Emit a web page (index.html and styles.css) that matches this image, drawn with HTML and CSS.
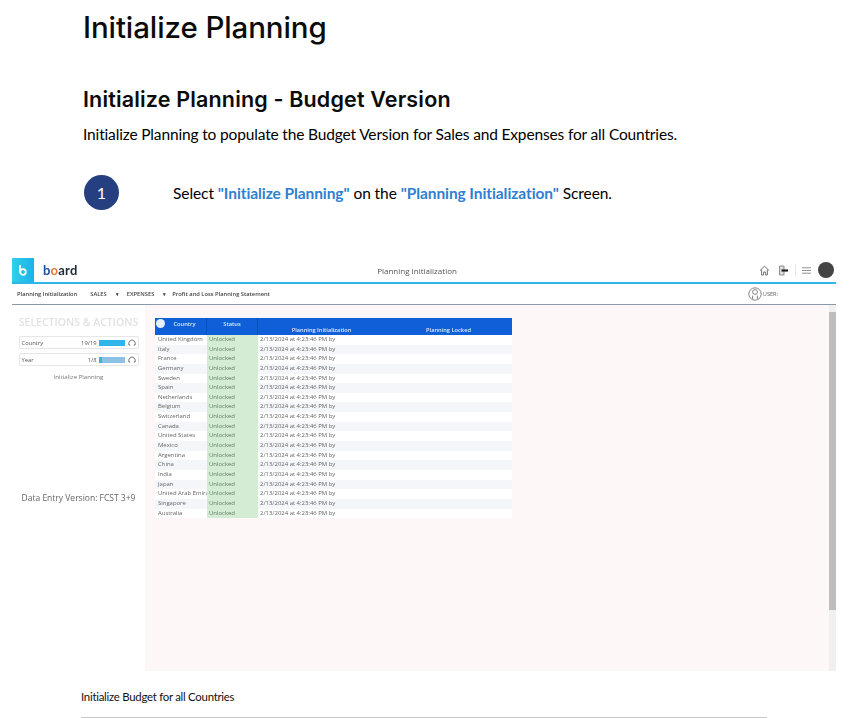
FILE: index.html
```html
<!DOCTYPE html>
<html lang="en">
<head>
<meta charset="utf-8">
<title>Initialize Planning</title>
<link rel="stylesheet" href="styles.css">
</head>
<body>
<main class="doc">
  <h1 class="title">Initialize Planning</h1>
  <h2 class="subtitle">Initialize Planning - Budget Version</h2>
  <p class="lead">Initialize Planning to populate the Budget Version for Sales and Expenses for all Countries.</p>
  <div class="step">
    <span class="step-num">1</span>
    <p class="step-text">Select <b>"Initialize Planning"</b> on the <b>"Planning Initialization"</b> Screen.</p>
  </div>
  <figure class="shot">
    <header class="app-head">
      <div class="brand-tile">
        <svg width="10" height="12" viewBox="0 0 10 12"><path d="M2 1v7.5" stroke="#fff" stroke-width="1.8" fill="none"/><circle cx="5" cy="8" r="2.8" stroke="#fff" stroke-width="1.8" fill="none"/></svg>
      </div>
      <div class="brand-name"><span class="brand-b">b</span><span class="brand-o">o</span>ard</div>
      <div class="app-title">Planning Initialization</div>
      <div class="app-icons">
        <svg class="ic" width="11" height="11" viewBox="0 0 11 11"><path d="M1 5.5 5.5 1.2 10 5.5M2.6 4.6V10h2V7h2v3h1.8V4.6" fill="none" stroke="#666" stroke-width=".9"/></svg>
        <svg class="ic ic-exit" width="11" height="11" viewBox="0 0 11 11"><path d="M1.5 1h4.5v9H1.5z" fill="#ddd" stroke="#777" stroke-width=".8"/><path d="M3.5 5.5h6.5" stroke="#222" stroke-width="2.2"/></svg>
        <span class="divider"></span>
        <svg class="ic ic-menu" width="9" height="7" viewBox="0 0 9 7"><path d="M0 .8h9M0 3.5h9M0 6.2h9" stroke="#888" stroke-width=".9"/></svg>
        <span class="avatar"></span>
      </div>
    </header>
    <nav class="app-nav">
      <span class="nav-a">Planning Initialization</span>
      <span class="nav-b">SALES</span><span class="caret">▾</span>
      <span class="nav-c">EXPENSES</span><span class="caret">▾</span>
      <span class="nav-d">Profit and Loss Planning Statement</span>
      <span class="user">
        <svg width="14" height="14" viewBox="0 0 14 14"><circle cx="7" cy="7" r="6.2" fill="none" stroke="#666" stroke-width=".8"/><circle cx="7" cy="5" r="2.4" fill="none" stroke="#666" stroke-width=".8"/><path d="M4.6 12V8.6M9.4 12V8.6" stroke="#666" stroke-width=".8"/></svg>
        USER:
      </span>
    </nav>
    <div class="app-body">
      <aside class="side">
        <div class="side-title">SELECTIONS &amp; ACTIONS</div>
        <div class="sel">
          <span class="sel-name">Country</span><span class="sel-val">19/19</span>
          <span class="bar"><span class="bar-fill" style="width:100%"></span></span>
          <svg class="sel-ic" width="8" height="8" viewBox="0 0 8 8"><path d="M1.6 6.4A3.2 3.2 0 1 1 6.4 6.4M6.4 6.4l.9-1.2M1.6 6.4l-.9-1.2" fill="none" stroke="#555" stroke-width=".8"/></svg>
        </div>
        <div class="sel">
          <span class="sel-name">Year</span><span class="sel-val">1/8</span>
          <span class="bar bar-light"><span class="bar-fill" style="width:12%"></span></span>
          <svg class="sel-ic" width="8" height="8" viewBox="0 0 8 8"><path d="M1.6 6.4A3.2 3.2 0 1 1 6.4 6.4M6.4 6.4l.9-1.2M1.6 6.4l-.9-1.2" fill="none" stroke="#555" stroke-width=".8"/></svg>
        </div>
        <div class="side-action">Initialize Planning</div>
        <div class="side-version">Data Entry Version: FCST 3+9</div>
      </aside>
      <section class="canvas">
        <div class="grid">
          <div class="grid-head">
            <span class="gh gh-country"><i class="gh-dot"></i>Country</span>
            <span class="gh gh-status">Status</span>
            <span class="gh gh-low">Planning Initialization</span>
            <span class="gh gh-low">Planning Locked</span>
          </div>
          <div class="row"><span>United Kingdom</span><span class="st">Unlocked</span><span>2/13/2024 at 4:23:46 PM by</span><span></span></div>
          <div class="row"><span>Italy</span><span class="st">Unlocked</span><span>2/13/2024 at 4:23:46 PM by</span><span></span></div>
          <div class="row"><span>France</span><span class="st">Unlocked</span><span>2/13/2024 at 4:23:46 PM by</span><span></span></div>
          <div class="row"><span>Germany</span><span class="st">Unlocked</span><span>2/13/2024 at 4:23:46 PM by</span><span></span></div>
          <div class="row"><span>Sweden</span><span class="st">Unlocked</span><span>2/13/2024 at 4:23:46 PM by</span><span></span></div>
          <div class="row"><span>Spain</span><span class="st">Unlocked</span><span>2/13/2024 at 4:23:46 PM by</span><span></span></div>
          <div class="row"><span>Netherlands</span><span class="st">Unlocked</span><span>2/13/2024 at 4:23:46 PM by</span><span></span></div>
          <div class="row"><span>Belgium</span><span class="st">Unlocked</span><span>2/13/2024 at 4:23:46 PM by</span><span></span></div>
          <div class="row"><span>Switzerland</span><span class="st">Unlocked</span><span>2/13/2024 at 4:23:46 PM by</span><span></span></div>
          <div class="row"><span>Canada</span><span class="st">Unlocked</span><span>2/13/2024 at 4:23:46 PM by</span><span></span></div>
          <div class="row"><span>United States</span><span class="st">Unlocked</span><span>2/13/2024 at 4:23:46 PM by</span><span></span></div>
          <div class="row"><span>Mexico</span><span class="st">Unlocked</span><span>2/13/2024 at 4:23:46 PM by</span><span></span></div>
          <div class="row"><span>Argentina</span><span class="st">Unlocked</span><span>2/13/2024 at 4:23:46 PM by</span><span></span></div>
          <div class="row"><span>China</span><span class="st">Unlocked</span><span>2/13/2024 at 4:23:46 PM by</span><span></span></div>
          <div class="row"><span>India</span><span class="st">Unlocked</span><span>2/13/2024 at 4:23:46 PM by</span><span></span></div>
          <div class="row"><span>Japan</span><span class="st">Unlocked</span><span>2/13/2024 at 4:23:46 PM by</span><span></span></div>
          <div class="row"><span>United Arab Emirates</span><span class="st">Unlocked</span><span>2/13/2024 at 4:23:46 PM by</span><span></span></div>
          <div class="row"><span>Singapore</span><span class="st">Unlocked</span><span>2/13/2024 at 4:23:46 PM by</span><span></span></div>
          <div class="row"><span>Australia</span><span class="st">Unlocked</span><span>2/13/2024 at 4:23:46 PM by</span><span></span></div>
        </div>
      </section>
      <div class="scroll"><span class="thumb"></span></div>
    </div>
  </figure>
  <p class="caption">Initialize Budget for all Countries</p>
  <hr class="rule">
</main>
</body>
</html>
```
FILE: styles.css
```css
* { box-sizing: border-box; }
html, body { margin: 0; padding: 0; background: #fff; overflow: hidden; }
body { width: 866px; height: 718px; font-family: "Lato", sans-serif; color: #000; }
.doc { display: flex; flex-direction: column; }
.title { margin: 8px 0 0 83px; font: 550 29.5px/38px "Inter", sans-serif; letter-spacing: -.1px; color: #0b0b0b; }
.subtitle { margin: 39px 0 0 83px; font: 600 21.5px/28px "Inter", sans-serif; letter-spacing: .16px; color: #0b0b0b; }
.lead { margin: 10px 0 0 83px; font-size: 15.5px; line-height: 22px; letter-spacing: -.155px; }
.step { display: flex; align-items: center; margin: 30px 0 0 84px; height: 35px; }
.step-num { width: 35px; height: 35px; border-radius: 50%; background: #253f80; color: #fff; display: flex; align-items: center; justify-content: center; font-size: 16px; }
.step-text { margin: 0 0 0 54px; font-size: 15.5px; letter-spacing: -.08px; }
.step-text b { color: #2f80d0; font-weight: 700; }
.shot { margin: 48px 0 0 12px; width: 824px; height: 413px; display: flex; flex-direction: column; font-family: "Open Sans", sans-serif; filter: blur(.35px); }
.app-head { height: 26px; display: flex; align-items: center; border-bottom: 2px solid #2fb5ea; position: relative; }
.brand-tile { width: 22px; height: 24px; background: linear-gradient(90deg, #2fd0ea, #1cb2e8); display: flex; align-items: center; justify-content: center; }
.brand-name { margin-left: 9px; font: 700 13px/1 "Lato", sans-serif; color: #1c2a3a; letter-spacing: .2px; }
.brand-b { color: #1c4fa0; }
.brand-o { color: #e0762f; }
.app-title { position: absolute; left: 0; right: 14px; text-align: center; font-size: 8px; color: #555; }
.app-icons { margin-left: auto; display: flex; align-items: center; padding-right: 2px; }
.ic-exit { margin-left: 8px; }
.divider { width: 1px; height: 13px; background: #e8e8e8; margin: 0 6px 0 6px; }
.avatar { width: 16px; height: 16px; border-radius: 50%; background: #444; margin-left: 7px; }
.app-nav { height: 21px; display: flex; align-items: center; border-bottom: 1px solid #8b98a8; font-size: 5.75px; font-weight: 600; color: #444; padding-left: 5px; }
.nav-b { margin-left: 13px; }
.caret { margin: 0 6px 0 9px; font-size: 5px; color: #333; }
.nav-c { margin-left: 2px; }
.user { margin-left: auto; margin-right: 58px; display: flex; align-items: center; gap: 1px; font-weight: 400; font-size: 5.6px; color: #666; }
.app-body { flex: 1; display: flex; min-height: 0; }
.side { width: 133px; padding: 10px 0 0 0; display: flex; flex-direction: column; align-items: center; }
.side-title { font-size: 10.5px; color: #e2e2e2; font-weight: 600; height: 16px; white-space: nowrap; }
.sel { width: 120px; height: 13px; margin-top: 5px; display: flex; align-items: center; padding: 0 2px; border: 1px solid #e6e6e6; border-radius: 2px; font-size: 5.8px; color: #555; }
.sel + .sel { margin-top: 4px; }
.sel-val { margin-left: auto; }
.bar { width: 26px; height: 6px; margin-left: 2px; background: #2fb5ea; display: block; }
.bar-light { background: #8fc0e6; }
.bar-fill { display: block; height: 100%; background: #2fb5ea; }
.sel-ic { margin-left: 3px; }
.side-action { margin-top: 6px; font-size: 6.1px; color: #777; }
.side-version { margin-top: 111px; font-size: 8.5px; color: #666; white-space: nowrap; }
.canvas { width: 684px; background: #fdf8f7; padding: 13px 0 0 10px; }
.grid { width: 357px; }
.grid-head { display: grid; grid-template-columns: 52px 51px 127px 127px; height: 17px; background: #0f5fd8; color: #dfe9fb; font-size: 5.7px; font-weight: 600; }
.gh { display: flex; justify-content: center; padding-top: 2px; position: relative; border-right: 1px solid #0a50bb; }
.gh-low { padding-top: 8px; border: 0; }
.gh-dot { position: absolute; left: 1px; top: 1px; width: 9px; height: 9px; background: #e6effb; border-radius: 50%; }
.gh-country { padding-left: 8px; }
.row { display: grid; grid-template-columns: 52px 51px 127px 127px; height: 9.65px; background: #fff; font-size: 5.95px; line-height: 9.65px; color: #666; white-space: nowrap; }
.row:nth-child(odd) { background: #f5f6f9; }
.row span { padding-left: 2px; overflow: hidden; }
.row span:first-child { padding-left: 3px; }
.st { background: #d4ecd4; color: #5f7f60; }
.scroll { width: 7px; background: #f0f0f0; padding: 7px 0 62px; }
.thumb { display: block; height: 298px; background: #bdbdbd; }
.caption { margin: 19px 0 0 81px; font-size: 11.4px; line-height: 14px; letter-spacing: -.26px; color: #111; }
.rule { margin: 13px 0 0 81px; width: 686px; height: 1px; border: 0; background: #c8c8c8; }
```
